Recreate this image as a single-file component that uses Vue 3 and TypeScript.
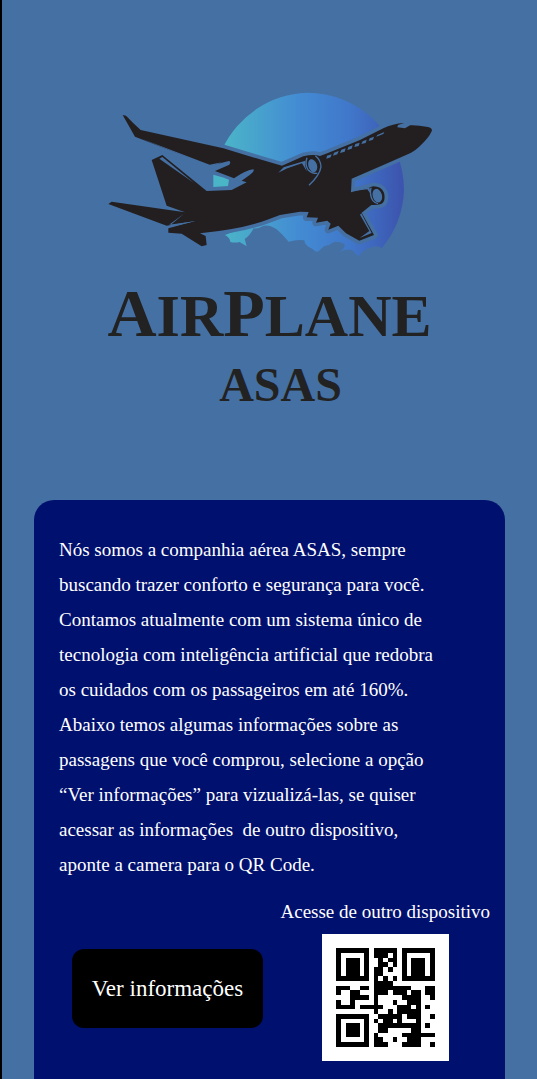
<script setup lang="ts">
const about: string = [
  'Nós somos a companhia aérea ASAS, sempre',
  'buscando trazer conforto e segurança para você.',
  'Contamos atualmente com um sistema único de',
  'tecnologia com inteligência artificial que redobra',
  'os cuidados com os passageiros em até 160%.',
  'Abaixo temos algumas informações sobre as',
  'passagens que você comprou, selecione a opção',
  '“Ver informações” para vizualizá-las, se quiser',
  'acessar as informações  de outro dispositivo,',
  'aponte a camera para o QR Code.',
].join('\n')

const qrRows: string[] = [
  '111111101111101111111',
  '100000101110101000001',
  '101110100101101011101',
  '101110100110101011101',
  '101110101101001011101',
  '101110101100001011101',
  '111111101010101111111',
  '000000001111000000000',
  '111001101111111100011',
  '100110001110111011011',
  '000111101000001111001',
  '100100001000100111000',
  '111101111100011101010',
  '000000001001011111000',
  '111111100111110111001',
  '100000101011010001000',
  '101110100111111111010',
  '101110100110000011000',
  '101110101000001111111',
  '100000101100100111000',
  '111111101110001111001',
]

const qrPath: string = qrRows
  .flatMap((row, y) => [...row].map((cell, x) => (cell === '1' ? `M${x} ${y}h1v1h-1z` : '')))
  .join('')
</script>

<template>
  <main class="page">
    <header class="brand">
      <svg class="plane" viewBox="0 0 1035 540" role="img" aria-label="AirPlane ASAS">
        <defs>
          <linearGradient id="sky" x1="370" x2="913" y1="0" y2="0" gradientUnits="userSpaceOnUse">
            <stop offset="0" stop-color="#4bb5c8" />
            <stop offset="0.42" stop-color="#438bd3" />
            <stop offset="0.7" stop-color="#4077ca" />
            <stop offset="1" stop-color="#3c53ad" />
          </linearGradient>
        </defs>
        <path
          fill="url(#sky)"
          d="M368 190A292 292 0 0 1 620 23A292 292 0 0 1 912 315A292 292 0 0 1 845 490Q833 479 812 488Q791 492 778 512Q770 515 762 499Q748 487 720 500Q738 488 733 477Q705 461 687 481Q674 477 656 499Q647 503 638 492Q614 483 613 466Q592 462 566 470Q551 452 530 433Q509 418 491 422Q473 432 461 430Q449 453 434 462L440 484L419 471Q405 474 391 471Q391 459 375 450L500 400V230Z"
        />
        <g class="hull">
          <path
            d="M68 90L78 92Q99 114 122 135L370 190L510 232L546 242L610 214Q640 206 660 213L682 205L780 165L850 130Q877 116 913 114L894 120L892 127L915 130L930 121Q952 120 984 126Q999 130 995 139Q987 158 960 183Q941 201 925 207L850 240L755 281L753 322L820 304Q843 304 852 323Q858 350 843 357Q831 361 814 360L785 383L822 450L778 467L738 445L715 422L685 434L692 416L682 407L648 413L654 398L620 397L626 381L600 380L540 390L500 405Q427 432 300 445L317 453L320 480L305 484L245 446L205 443V430L285 408L200 422L25 357L35 350L255 382L200 362L155 225L187 210L320 318L395 315L440 292L425 287L449 270Q465 257 460 253Q440 254 402 280L345 258L388 239Q394 229 387 228L330 242L105 155Z"
          />
        </g>
        <path fill="#4bb5c8" d="M340 269L367 277L387 284L384 303L340 306Z" />
        <g class="gap">
          <path d="M121 160L329 239L365 232L330 246Z" />
          <path d="M178 221L187 216L281 293L195 233Z" />
          <path d="M252 386L202 428L285 409L207 419Z" />
          <path d="M535 263L551 247L616 227Q614 244 620 259L606 235L562 250Z" />
          <path d="M756 319L808 306L812 327L802 313Z" />
          <path d="M784 385L815 444L779 459L808 438L780 389Z" />
        </g>
        <g class="cut">
          <ellipse cx="638" cy="242" rx="15" ry="22" transform="rotate(-18 638 242)" />
          <path d="M646 212Q662 224 663 245Q660 270 627 301" />
          <path d="M621 218Q614 237 624 254Q636 266 652 265" />
          <ellipse cx="832" cy="332" rx="16" ry="23" transform="rotate(-16 832 332)" />
          <path d="M813 308Q808 330 818 346Q825 355 834 356" />
        </g>
        <path
          class="gap"
          d="M681 212L695 208L692 217L679 221ZM702 203L716 198L712 208L699 212ZM724 194L737 190L734 200L720 204ZM745 186L758 181L755 191L742 195ZM766 177L779 173L776 183L763 186ZM788 169L800 164L797 174L784 177ZM809 160L822 155L819 164L806 168ZM832 150L853 141L850 147L829 155Z"
        />
      </svg>
      <h1 class="wordmark"><span class="initial">A</span>IR<span class="initial">P</span>LANE</h1>
      <p class="tagline">ASAS</p>
    </header>

    <section class="card">
      <p class="about">{{ about }}</p>
      <div class="actions">
        <button type="button" class="details">Ver informações</button>
        <figure class="share">
          <figcaption>Acesse de outro dispositivo</figcaption>
          <svg class="qr" viewBox="-3 -3 27 27" role="img" aria-label="QR Code" shape-rendering="crispEdges">
            <path :d="qrPath" />
          </svg>
        </figure>
      </div>
    </section>
  </main>
</template>

<style>
body {
  margin: 0;
  background: #4570a3;
}
</style>

<style scoped>
.page {
  box-sizing: border-box;
  min-height: 100vh;
  display: flex;
  flex-direction: column;
  border-left: 2px solid #000;
  background: #4570a3;
  font-family: "Liberation Serif", serif;
}

.brand {
  display: flex;
  flex-direction: column;
  align-items: center;
  padding: 85px 0 91px;
  color: #222;
}

.plane {
  display: block;
  width: 345px;
  height: 180px;
  margin-left: 6px;
}

.hull {
  fill: #231f20;
  stroke: #4570a3;
  stroke-width: 22px;
  stroke-linejoin: round;
  paint-order: stroke;
}

.gap {
  fill: #4570a3;
}

.cut {
  fill: none;
  stroke: #4570a3;
  stroke-width: 4px;
}

.cut ellipse {
  fill: #4570a3;
  stroke: #231f20;
}

.wordmark {
  margin: 16px 0 0;
  font-size: 60px;
  font-weight: 700;
  line-height: 64px;
}

.initial {
  font-size: 68px;
}

.tagline {
  margin: 13px 0 0;
  padding-left: 22px;
  font-size: 48px;
  font-weight: 700;
  line-height: 48px;
}

.card {
  flex: 1;
  margin: 0 32px;
  padding: 32px 15px 18px 25px;
  border-radius: 20px 20px 0 0;
  background: #00106e;
  color: #fff;
}

.about {
  margin: 0;
  font-size: 19px;
  line-height: 35px;
  white-space: pre-wrap;
}

.actions {
  display: flex;
  justify-content: space-between;
  align-items: flex-end;
  padding: 18px 0 0 13px;
}

.details {
  width: 191px;
  height: 79px;
  margin-bottom: 33px;
  padding: 0;
  border: 0;
  border-radius: 12px;
  background: #000;
  color: #fff;
  font-family: inherit;
  font-size: 23px;
}

.share {
  display: flex;
  flex-direction: column;
  align-items: center;
  gap: 10px;
  margin: 0;
}

.share figcaption {
  font-size: 19px;
  line-height: 24px;
}

.qr {
  display: block;
  width: 127px;
  height: 127px;
  background: #fff;
}
</style>
